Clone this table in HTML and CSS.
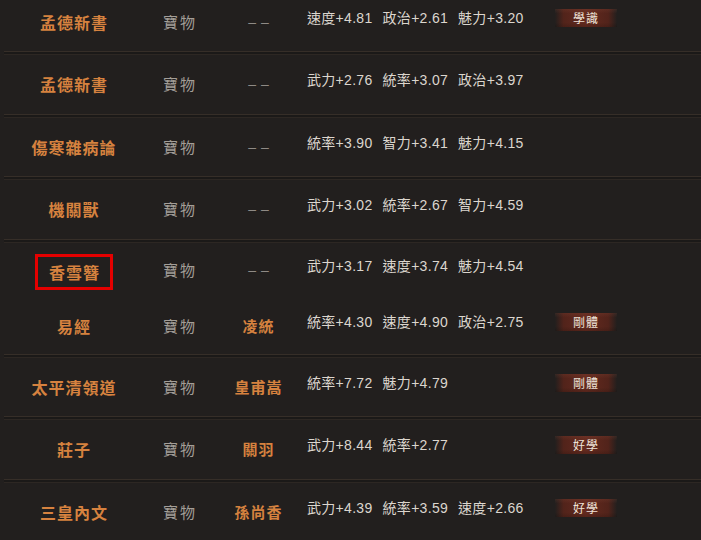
FILE: index.html
```html
<!DOCTYPE html>
<html lang="zh-Hant">
<head>
<meta charset="utf-8">
<title>寶物列表</title>
<link rel="stylesheet" href="styles.css">
</head>
<body>
<div class="list">
  <div class="row">
    <div class="name">孟德新書</div>
    <div class="type">寶物</div>
    <div class="owner none">––</div>
    <div class="stats"><span>速度+4.81</span><span>政治+2.61</span><span>魅力+3.20</span></div>
    <div class="badge">學識</div>
  </div>
  <div class="sep"></div>
  <div class="row">
    <div class="name">孟德新書</div>
    <div class="type">寶物</div>
    <div class="owner none">––</div>
    <div class="stats"><span>武力+2.76</span><span>統率+3.07</span><span>政治+3.97</span></div>
  </div>
  <div class="sep"></div>
  <div class="row">
    <div class="name">傷寒雜病論</div>
    <div class="type">寶物</div>
    <div class="owner none">––</div>
    <div class="stats"><span>統率+3.90</span><span>智力+3.41</span><span>魅力+4.15</span></div>
  </div>
  <div class="sep"></div>
  <div class="row">
    <div class="name">機關獸</div>
    <div class="type">寶物</div>
    <div class="owner none">––</div>
    <div class="stats"><span>武力+3.02</span><span>統率+2.67</span><span>智力+4.59</span></div>
  </div>
  <div class="sep"></div>
  <div class="group">
    <div class="row sub">
      <div class="name"><span class="mark">香雪簪</span></div>
      <div class="type">寶物</div>
      <div class="owner none">––</div>
      <div class="stats"><span>武力+3.17</span><span>速度+3.74</span><span>魅力+4.54</span></div>
    </div>
    <div class="row sub">
      <div class="name">易經</div>
      <div class="type">寶物</div>
      <div class="owner">凌統</div>
      <div class="stats"><span>統率+4.30</span><span>速度+4.90</span><span>政治+2.75</span></div>
      <div class="badge">剛體</div>
    </div>
  </div>
  <div class="sep"></div>
  <div class="row">
    <div class="name">太平清領道</div>
    <div class="type">寶物</div>
    <div class="owner">皇甫嵩</div>
    <div class="stats"><span>統率+7.72</span><span>魅力+4.79</span></div>
    <div class="badge">剛體</div>
  </div>
  <div class="sep"></div>
  <div class="row">
    <div class="name">莊子</div>
    <div class="type">寶物</div>
    <div class="owner">關羽</div>
    <div class="stats"><span>武力+8.44</span><span>統率+2.77</span></div>
    <div class="badge">好學</div>
  </div>
  <div class="sep"></div>
  <div class="row">
    <div class="name">三皇內文</div>
    <div class="type">寶物</div>
    <div class="owner">孫尚香</div>
    <div class="stats"><span>武力+4.39</span><span>統率+3.59</span><span>速度+2.66</span></div>
    <div class="badge">好學</div>
  </div>
</div>
</body>
</html>
```
FILE: styles.css
```css
html, body {
  margin: 0;
  padding: 0;
  background: #221f1e;
  overflow: hidden;
}

body {
  font-family: "Liberation Sans", "Noto Sans CJK TC", sans-serif;
  height: 540px;
}

.list {
  margin-top: -7.5px;
}

.row {
  display: grid;
  grid-template-columns: 148px 62px 97px 248px 62px;
  align-items: center;
  height: 58.5px;
  line-height: 20px;
}

.group {
  display: flex;
  flex-direction: column;
  height: 111px;
}

.row.sub {
  height: 55.5px;
}

.sep {
  height: 4px;
  margin-left: 4px;
  background: linear-gradient(to bottom, #362e28 0, #362e28 1px, #1b1918 1px, #1b1918 3px, #2d2723 3px, #2d2723 4px);
}

.name {
  text-align: center;
  color: #d6823f;
  font-family: "Noto Sans CJK TC", sans-serif;
  font-size: 16px;
  font-weight: 700;
  letter-spacing: 1px;
}

.mark {
  display: inline-block;
  border: 3px solid #e40000;
  padding: 5px 10px 5px 11px;
  margin-top: 4px;
}

.type {
  text-align: center;
  color: #a39e98;
  font-family: "Noto Sans CJK TC", sans-serif;
  font-size: 15px;
  letter-spacing: 2px;
  padding-left: 2px;
}

.owner {
  text-align: center;
  color: #d6823f;
  font-family: "Noto Sans CJK TC", sans-serif;
  font-size: 15px;
  font-weight: 700;
  letter-spacing: 1px;
}

.owner.none {
  color: #8f8a85;
  font-family: "Liberation Sans", sans-serif;
  font-weight: 400;
  letter-spacing: 5px;
  padding-left: 5px;
  font-size: 14px;
}

.stats {
  display: flex;
  gap: 10px;
  color: #dcd6ce;
  font-size: 14px;
  padding-bottom: 8px;
  white-space: nowrap;
}

.stats span {
  letter-spacing: 0.3px;
}

.badge {
  height: 18px;
  line-height: 18px;
  margin-bottom: 8px;
  text-align: center;
  color: #eee3d8;
  font-family: "Noto Sans CJK TC", sans-serif;
  font-size: 12px;
  letter-spacing: 1px;
  background:
    linear-gradient(to bottom, rgba(160, 90, 70, 0.15), rgba(0, 0, 0, 0) 25%, rgba(0, 0, 0, 0) 75%, rgba(0, 0, 0, 0.15)),
    linear-gradient(90deg, rgba(90, 36, 26, 0) 0%, rgba(90, 36, 26, 0.85) 14%, #642a1f 50%, rgba(90, 36, 26, 0.85) 86%, rgba(90, 36, 26, 0) 100%);
}
```
